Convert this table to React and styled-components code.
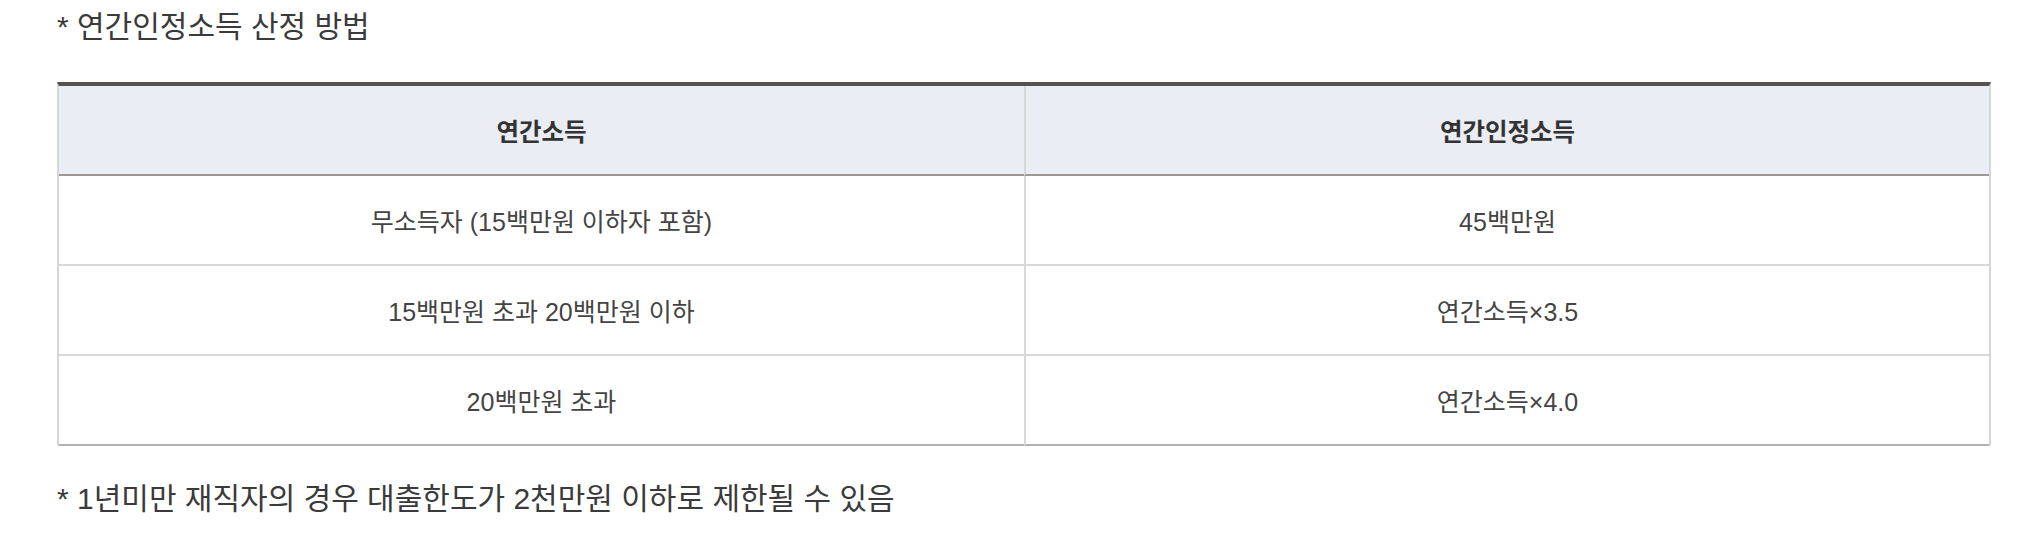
import React from "react";
import styled, { createGlobalStyle } from "styled-components";

const GlobalStyle = createGlobalStyle`
  html, body {
    margin: 0;
    padding: 0;
    background: #ffffff;
  }
  body {
    font-family: "Liberation Sans", "Noto Sans CJK KR", sans-serif;
    color: #333333;
  }
`;

const rows = [
  { income: "무소득자 (15백만원 이하자 포함)", recognized: "45백만원" },
  { income: "15백만원 초과 20백만원 이하", recognized: "연간소득×3.5" },
  { income: "20백만원 초과", recognized: "연간소득×4.0" },
];

const App = () => {
  return (
    <>
      <GlobalStyle />
      <Wrapper>
        <Note>* 연간인정소득 산정 방법</Note>
        <IncomeTable>
          <colgroup>
            <col style={{ width: "50%" }} />
            <col style={{ width: "50%" }} />
          </colgroup>
          <thead>
            <tr>
              <HeadCell>연간소득</HeadCell>
              <HeadCell divider>연간인정소득</HeadCell>
            </tr>
          </thead>
          <tbody>
            {rows.map((row, index) => (
              <tr key={row.income}>
                <BodyCell last={index === rows.length - 1}>{row.income}</BodyCell>
                <BodyCell divider last={index === rows.length - 1}>
                  {row.recognized}
                </BodyCell>
              </tr>
            ))}
          </tbody>
        </IncomeTable>
        <Note bottom>* 1년미만 재직자의 경우 대출한도가 2천만원 이하로 제한될 수 있음</Note>
      </Wrapper>
    </>
  );
};

export default App;

const Wrapper = styled.div`
  display: flex;
  flex-direction: column;
  padding: 7px 0 0 57px;
  width: 1934px;
`;

const Note = styled.p`
  margin: ${({ bottom }) => (bottom ? "33px 0 0 0" : "0 0 35px 0")};
  font-size: 30px;
  line-height: 40px;
  color: #3a3a3a;
`;

const IncomeTable = styled.table`
  width: 1934px;
  table-layout: fixed;
  border-collapse: separate;
  border-spacing: 0;
  border-top: 4px solid #57524e;
  border-left: 2px solid #d6d6d6;
  border-right: 2px solid #d6d6d6;
`;

const HeadCell = styled.th`
  height: 88px;
  padding: 0;
  background: #eaedf4;
  border-bottom: 2px solid #9d9894;
  border-left: ${({ divider }) => (divider ? "2px solid #d8d8d8" : "none")};
  font-size: 24.5px;
  font-weight: 700;
  color: #333333;
  text-align: center;
  vertical-align: middle;
`;

const BodyCell = styled.td`
  height: 88px;
  padding: 0;
  background: #ffffff;
  border-bottom: 2px solid ${({ last }) => (last ? "#b2b2b2" : "#d8d8d8")};
  border-left: ${({ divider }) => (divider ? "2px solid #d8d8d8" : "none")};
  font-size: 25px;
  color: #444444;
  text-align: center;
  vertical-align: middle;
`;
